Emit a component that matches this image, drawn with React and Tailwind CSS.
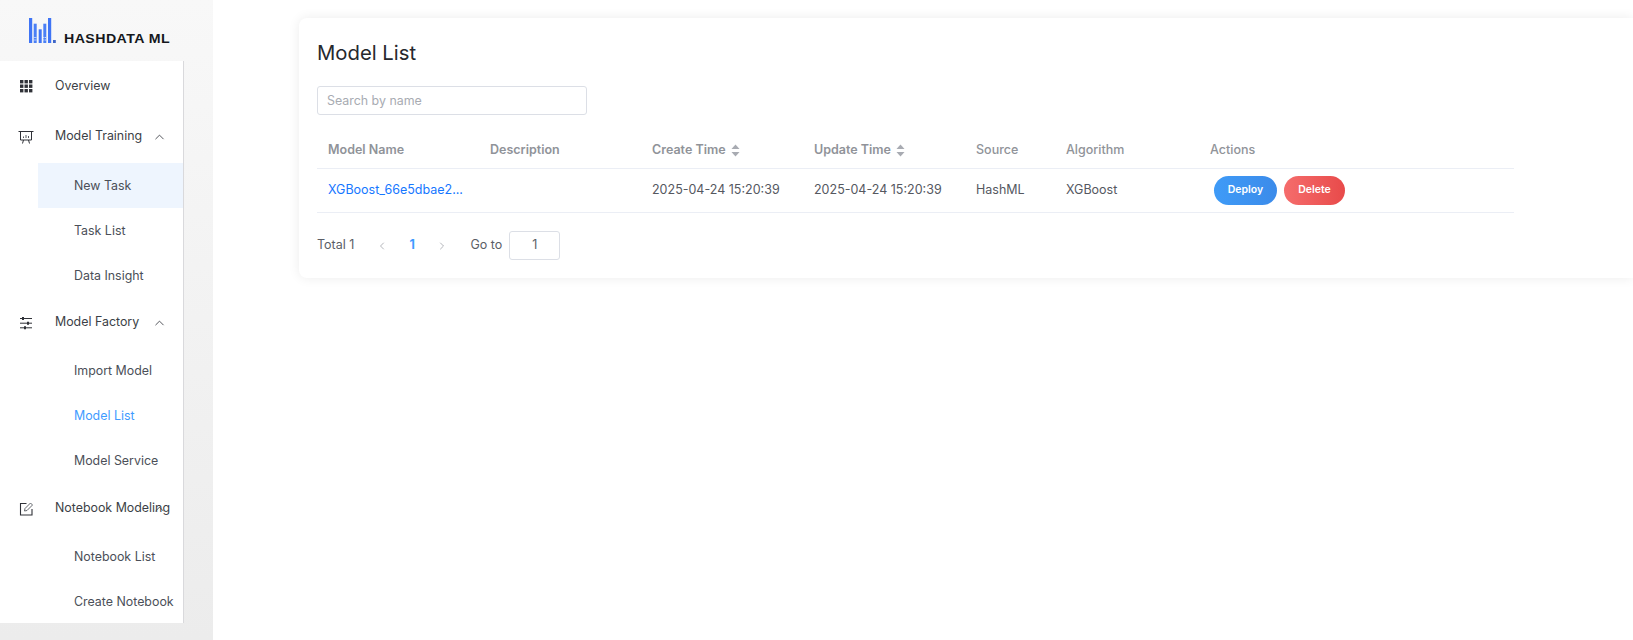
import { ChevronUp, ChevronLeft, ChevronRight } from "lucide-react";

const font = "font-['Inter','Liberation_Sans',sans-serif]";

function Logo() {
  return (
    <div className="h-[61px] flex items-start pl-[29px] pt-[18px]">
      <svg width="27" height="25" viewBox="0 0 27 25" className="shrink-0">
        <rect x="0" y="0" width="3.2" height="25" fill="#3f74f5" />
        <rect x="4.7" y="5.7" width="3" height="19.3" fill="#4a7ff5" />
        <rect x="9.7" y="11.3" width="3" height="13.7" fill="#3f74f5" />
        <rect x="14.3" y="5.7" width="3" height="19.3" fill="#4a7ff5" />
        <rect x="19" y="0" width="3.2" height="25" fill="#3f74f5" />
        <rect x="24" y="22" width="2.8" height="3" fill="#3f66c8" />
        <path d="M4.7 19.5h3M4.7 22h3M14.3 19.5h3M14.3 22h3" stroke="#dbe6fd" strokeWidth="1" strokeDasharray="1 0.6" />
      </svg>
      <span className="ml-[8px] mt-[14px] text-[13px] leading-[14px] font-bold text-[#15171c] tracking-[0.4px] whitespace-nowrap font-['Liberation_Sans',sans-serif] scale-x-[1.09] origin-left">
        HASHDATA ML
      </span>
    </div>
  );
}

function GridIcon() {
  const cells = [0, 4.5, 9];
  return (
    <svg width="16" height="16" viewBox="0 0 16 16">
      {cells.map((y) => cells.map((x) => <rect key={`${x}-${y}`} x={x + 2} y={y + 2} width="3.4" height="3.4" fill="#303238" />))}
    </svg>
  );
}

function BoardIcon() {
  return (
    <svg width="16" height="16" viewBox="0 0 16 16" fill="none" stroke="#303238" strokeWidth="1">
      <path d="M0.5 2.5h15" />
      <path d="M2.5 2.5v8.5h11v-8.5" />
      <path d="M5.5 11l-1 3.5M10.5 11l1 3.5" />
      <path d="M5.5 9v-1.5M8 9v-3M10.5 9v-2" stroke="#55585f" />
    </svg>
  );
}

function SliderIcon() {
  return (
    <svg width="16" height="16" viewBox="0 0 16 16" fill="none" stroke="#303238" strokeWidth="1">
      <path d="M2 3.5h12M2 8.2h12M2 12.8h12" />
      <path d="M5 2v3M10 6.7v3M7 11.3v3" strokeWidth="2" />
    </svg>
  );
}

function EditIcon() {
  return (
    <svg width="16" height="16" viewBox="0 0 16 16" fill="none" stroke="#303238" strokeWidth="1.1">
      <path d="M8.5 2.5H2.5v11.5h11.500V8" />
      <path d="M6.500 10l0.500-2.500 5.500-5.500 2 2-5.500 5.500z" strokeWidth="0.9" stroke="#55585f" />
    </svg>
  );
}

function MenuGroup({ icon, label, chevron, height }) {
  return (
    <div className={`${height} flex items-center pl-[18px] relative text-[#3c3f46]`}>
      <span className="w-[16px] flex justify-center">{icon}</span>
      <span className="ml-[21px] text-[12.4px] whitespace-nowrap">{label}</span>
      {chevron && <ChevronUp size={15} strokeWidth={1.4} className="absolute left-[152px] top-1/2 -translate-y-1/2" />}
    </div>
  );
}

function SubItem({ label, active, selected }) {
  return (
    <div className={`h-[45px] ml-[38px] pl-[36px] pt-[1px] flex items-center text-[12.4px] whitespace-nowrap ${selected ? "bg-[#eef5fe] text-[#4b4f58]" : active ? "text-[#3f9bff]" : "text-[#4b4f58]"}`}>
      {label}
    </div>
  );
}

function SortCaret() {
  return (
    <svg width="9" height="13" viewBox="0 0 9 13" className="ml-[5px]">
      <path d="M4.500 0.500 L8.500 5 H0.500 Z" fill="#a8abb2" />
      <path d="M4.500 12.500 L8.500 8 H0.500 Z" fill="#a8abb2" />
    </svg>
  );
}

const cols = "grid grid-cols-[173px_162px_162px_162px_90px_144px_1fr] items-center";

export default function App() {
  return (
    <div className={`${font} h-[640px] w-[1633px] flex bg-white overflow-hidden`}>
      <aside className="w-[213px] h-full shrink-0 bg-gradient-to-b from-[#f8f8f8] to-[#ececec] flex flex-col">
        <Logo />
        <nav className="w-[184px] h-[562px] bg-white border-r border-[#d9d9dc]">
          <MenuGroup icon={<GridIcon />} label="Overview" height="h-[49px] pt-[1px]" />
          <MenuGroup icon={<BoardIcon />} label="Model Training" chevron height="h-[53px]" />
          <SubItem label="New Task" selected />
          <SubItem label="Task List" />
          <SubItem label="Data Insight" />
          <MenuGroup icon={<SliderIcon />} label="Model Factory" chevron height="h-[50px] pb-[1px]" />
          <SubItem label="Import Model" />
          <SubItem label="Model List" active />
          <SubItem label="Model Service" />
          <MenuGroup icon={<EditIcon />} label="Notebook Modeling" chevron height="h-[51px]" />
          <SubItem label="Notebook List" />
          <SubItem label="Create Notebook" />
        </nav>
      </aside>

      <main className="flex-1 pl-[86px] pt-[18px] min-w-0">
        <div className="h-[260px] bg-white rounded-l-[8px] shadow-[0_0_12px_rgba(0,0,0,0.08)] pl-[18px] pt-[21px]">
          <h1 className="text-[20.3px] leading-[28px] font-normal text-[#26282d]">Model List</h1>
          <input
            placeholder="Search by name"
            className="mt-[19px] w-[270px] h-[29px] px-[9px] border border-[#dcdfe6] rounded-[3px] text-[12.4px] placeholder:text-[#a8abb2] outline-none block"
          />
          <div className="w-[1197px] mt-[20px]">
            <div className={`${cols} h-[34px] border-b border-[#ebeef5] text-[12.5px] font-semibold text-[#909399] pb-[2px]`}>
              <div className="pl-[11px]">Model Name</div>
              <div>Description</div>
              <div className="flex items-center">Create Time<SortCaret /></div>
              <div className="flex items-center">Update Time<SortCaret /></div>
              <div className="font-medium">Source</div>
              <div className="font-medium">Algorithm</div>
              <div className="font-medium">Actions</div>
            </div>
            <div className={`${cols} h-[44px] border-b border-[#ebeef5] text-[12.5px] text-[#55585f] pb-[1px]`}>
              <div className="pl-[11px] text-[#1677ff] whitespace-nowrap">XGBoost_66e5dbae2...</div>
              <div />
              <div>2025-04-24 15:20:39</div>
              <div>2025-04-24 15:20:39</div>
              <div>HashML</div>
              <div>XGBoost</div>
              <div className="flex items-center gap-[7px] pl-[4px]">
                <button className="h-[29px] w-[63px] rounded-full bg-gradient-to-r from-[#3f9bf7] to-[#3b8bea] text-white text-[10.5px] font-semibold">Deploy</button>
                <button className="h-[29px] w-[61px] rounded-full bg-gradient-to-r from-[#f56c6c] to-[#e84a4a] text-white text-[10.5px] font-semibold">Delete</button>
              </div>
            </div>
          </div>
          <div className="mt-[18px] flex items-center text-[12.5px] text-[#5b5e66]">
            <span>Total 1</span>
            <ChevronLeft size={12} strokeWidth={1.3} className="ml-[22px] text-[#8a8d95]" />
            <span className="ml-[21px] w-[7px] font-bold text-[#3f9bff]">1</span>
            <ChevronRight size={12} strokeWidth={1.3} className="ml-[20px] text-[#8a8d95]" />
            <span className="ml-[22px]">Go to</span>
            <div className="ml-[7px] w-[51px] h-[29px] border border-[#dcdfe6] rounded-[3px] flex items-center justify-center">1</div>
          </div>
        </div>
      </main>
    </div>
  );
}
